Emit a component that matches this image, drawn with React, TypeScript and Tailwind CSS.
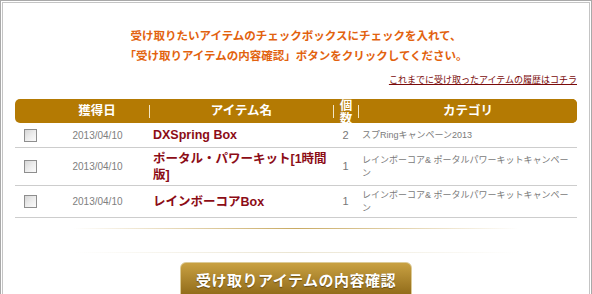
import React from 'react';

const rows = [
  { date: '2013/04/10', name: 'DXSpring Box', qty: 2, cat: 'スプRingキャンペーン2013' },
  { date: '2013/04/10', name: 'ポータル・パワーキット[1時間版]', qty: 1, cat: 'レインボーコア& ポータルパワーキットキャンペーン' },
  { date: '2013/04/10', name: 'レインボーコアBox', qty: 1, cat: 'レインボーコア& ポータルパワーキットキャンペーン' },
];

const cols = "grid grid-cols-[30px_104px_184px_25px_219px]";

function Check() {
  return (
    <span className="block w-[13px] h-[13px] border border-[#8e8e8e] bg-gradient-to-br from-[#d6d6d6] via-[#ececec] to-[#fbfbfb]" />
  );
}

function Divider() {
  return <div className="w-px h-[13px] bg-[#f3e6c6] shrink-0" />;
}

export default function App() {
  return (
    <div className="w-[592px] h-[294px] overflow-hidden bg-white font-['Liberation_Sans','Noto_Sans_CJK_JP',sans-serif]">
      <div className="h-[320px] border-l border-t border-r border-[#a9a9a9] p-px">
        <div className="h-full border-l border-t border-r border-[#c4c4c4] px-[12px] pt-[23px]">
          <div className="text-center text-[11.5px] leading-[20px] font-bold text-[#e2620e]">
            <p>受け取りたいアイテムのチェックボックスにチェックを入れて、</p>
            <p>「受け取りアイテムの内容確認」ボタンをクリックしてください。</p>
          </div>

          <div className="mt-[8px] text-right text-[9px] leading-[12px]">
            <a className="text-[#7a0a0a] underline">これまでに受け取ったアイテムの履歴はコチラ</a>
          </div>

          <div className="mt-[13px] w-[562px]">
            <div className={`${cols} h-[24px] bg-[#b47a03] rounded-[5px] text-white font-bold text-[12.5px]`}>
              <div />
              <div className="flex items-center justify-center">獲得日</div>
              <div className="flex items-center">
                <Divider />
                <span className="flex-1 text-center">アイテム名</span>
              </div>
              <div className="flex items-center relative">
                <Divider />
                <span className="absolute left-px right-0 top-[1px] text-center leading-[12.5px]">個数</span>
              </div>
              <div className="flex items-center relative z-10 bg-[#b47a03] rounded-r-[5px]">
                <Divider />
                <span className="flex-1 text-center">カテゴリ</span>
              </div>
            </div>

            {rows.map((r, i) => (
              <div key={i} className={`${cols} border-b border-[#cdcdcd] min-h-[25px]`}>
                <div className="flex items-center pl-[9px] py-[2.5px]">
                  <Check />
                </div>
                <div className="flex items-center justify-center text-[10px] text-[#808080] py-[2.5px] pl-[1px]">
                  {r.date}
                </div>
                <div className="flex items-center pl-[4px] py-[2.5px] text-[12.5px] leading-[16px] font-bold text-[#8c0c16]">
                  {r.name}
                </div>
                <div className="flex items-center justify-center text-[11px] text-[#777] py-[2.5px]">
                  {r.qty}
                </div>
                <div className="flex items-center pl-[4px] py-[2.5px] text-[9px] leading-[13px] text-[#7a7a7a]">
                  {r.cat}
                </div>
              </div>
            ))}
          </div>

          <div className="mt-[10px] mx-auto w-[446px] h-px bg-gradient-to-r from-transparent via-[#c9aa62] to-transparent" />
          <div className="mt-[23px] mx-auto w-[446px] h-px bg-gradient-to-r from-transparent via-[#ebe5d2] to-transparent" />

          <div className="mt-[9px] flex justify-center">
            <button className="w-[232px] h-[38px] rounded-[6px] border border-[#dccb98] bg-gradient-to-b from-[#c9a142] to-[#8a6513] text-white font-bold text-[15px] tracking-[0.5px] [text-shadow:0_1px_1px_rgba(60,40,0,0.6)]">
              受け取りアイテムの内容確認
            </button>
          </div>
        </div>
      </div>
    </div>
  );
}
